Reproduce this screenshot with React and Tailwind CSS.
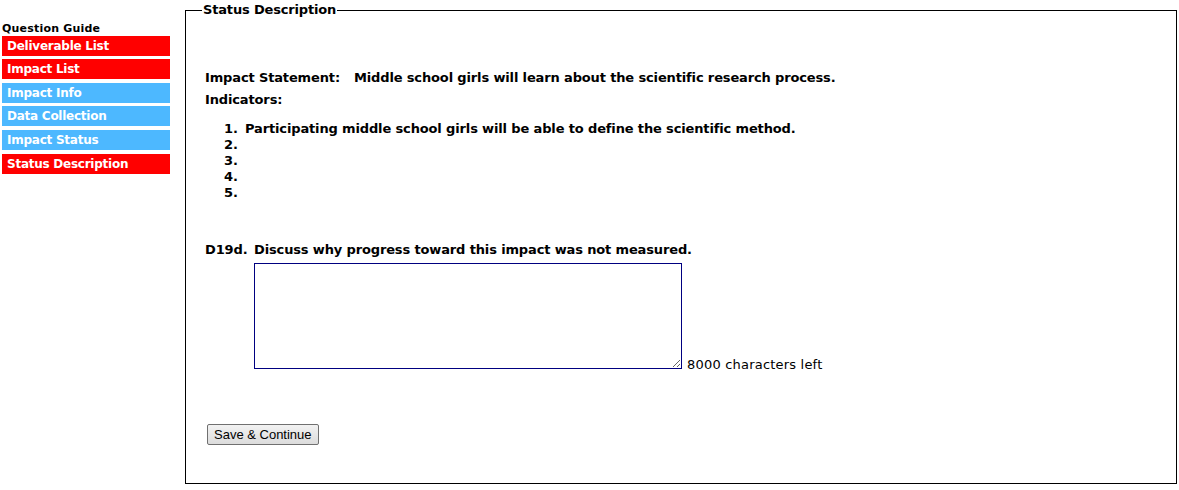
import React from 'react';

const navItems = [
  { label: 'Deliverable List', color: 'bg-[#ff0000]', mt: 'mt-0' },
  { label: 'Impact List', color: 'bg-[#ff0000]', mt: 'mt-[3px]' },
  { label: 'Impact Info', color: 'bg-[#4db8ff]', mt: 'mt-[4px]' },
  { label: 'Data Collection', color: 'bg-[#4db8ff]', mt: 'mt-[3px]' },
  { label: 'Impact Status', color: 'bg-[#4db8ff]', mt: 'mt-[4px]' },
  { label: 'Status Description', color: 'bg-[#ff0000]', mt: 'mt-[4px]' },
];

export default function App() {
  return (
    <div className="w-[1179px] h-[490px] bg-white flex text-black font-['DejaVu_Sans',Verdana,sans-serif] overflow-hidden">
      {/* Question guide sidebar */}
      <aside className="w-[170px] pl-[2px] pt-[22px] shrink-0">
        <div className="text-[11px] font-bold leading-[14px] tracking-[0.2px]">Question Guide</div>
        <nav className="flex flex-col">
          {navItems.map((item) => (
            <div
              key={item.label}
              className={`${item.color} ${item.mt} h-[20px] pl-[5px] text-white text-[12px] font-bold leading-[21px] tracking-[-0.25px] whitespace-nowrap`}
            >
              {item.label}
            </div>
          ))}
        </nav>
      </aside>

      {/* Status description panel */}
      <fieldset className="ml-[15px] mt-[2px] w-[992px] h-[482px] border border-black px-[19px] pb-0 pt-0 tracking-[-0.14px]">
        <legend className="px-[1px] -ml-[3px] text-[13px] font-bold leading-[16px] tracking-[-0.17px]">Status Description</legend>

        <div className="mt-[52px] text-[13px] font-bold leading-[16px]">
          <div className="flex">
            <span>Impact Statement:</span>
            <span className="ml-[14px]">Middle school girls will learn about the scientific research process.</span>
          </div>
          <div className="mt-[6px]">Indicators:</div>

          <ol className="mt-[13px] ml-[19px]">
            <li className="flex"><span className="w-[21px]">1.</span><span>Participating middle school girls will be able to define the scientific method.</span></li>
            <li className="flex"><span className="w-[21px]">2.</span></li>
            <li className="flex"><span className="w-[21px]">3.</span></li>
            <li className="flex"><span className="w-[21px]">4.</span></li>
            <li className="flex"><span className="w-[21px]">5.</span></li>
          </ol>

          <div className="mt-[41px] flex">
            <span className="w-[49px]">D19d.</span>
            <span>Discuss why progress toward this impact was not measured.</span>
          </div>
        </div>

        <div className="flex items-end ml-[49px] mt-[5px]">
          <textarea className="w-[428px] h-[106px] border border-[#000080] resize-y bg-white outline-none block" />
          <span className="ml-[5px] text-[13px] leading-[16px] -mb-[4px] tracking-[0.2px]">8000 characters left</span>
        </div>

        <button className="mt-[55px] ml-[2px] h-[21px] px-[6px] border border-[#707070] rounded-[2px] bg-gradient-to-b from-[#f2f2f2] to-[#dcdcdc] text-[13px] leading-[17px] tracking-normal font-['Liberation_Sans',Arial,sans-serif]">
          Save &amp; Continue
        </button>
      </fieldset>
    </div>
  );
}
